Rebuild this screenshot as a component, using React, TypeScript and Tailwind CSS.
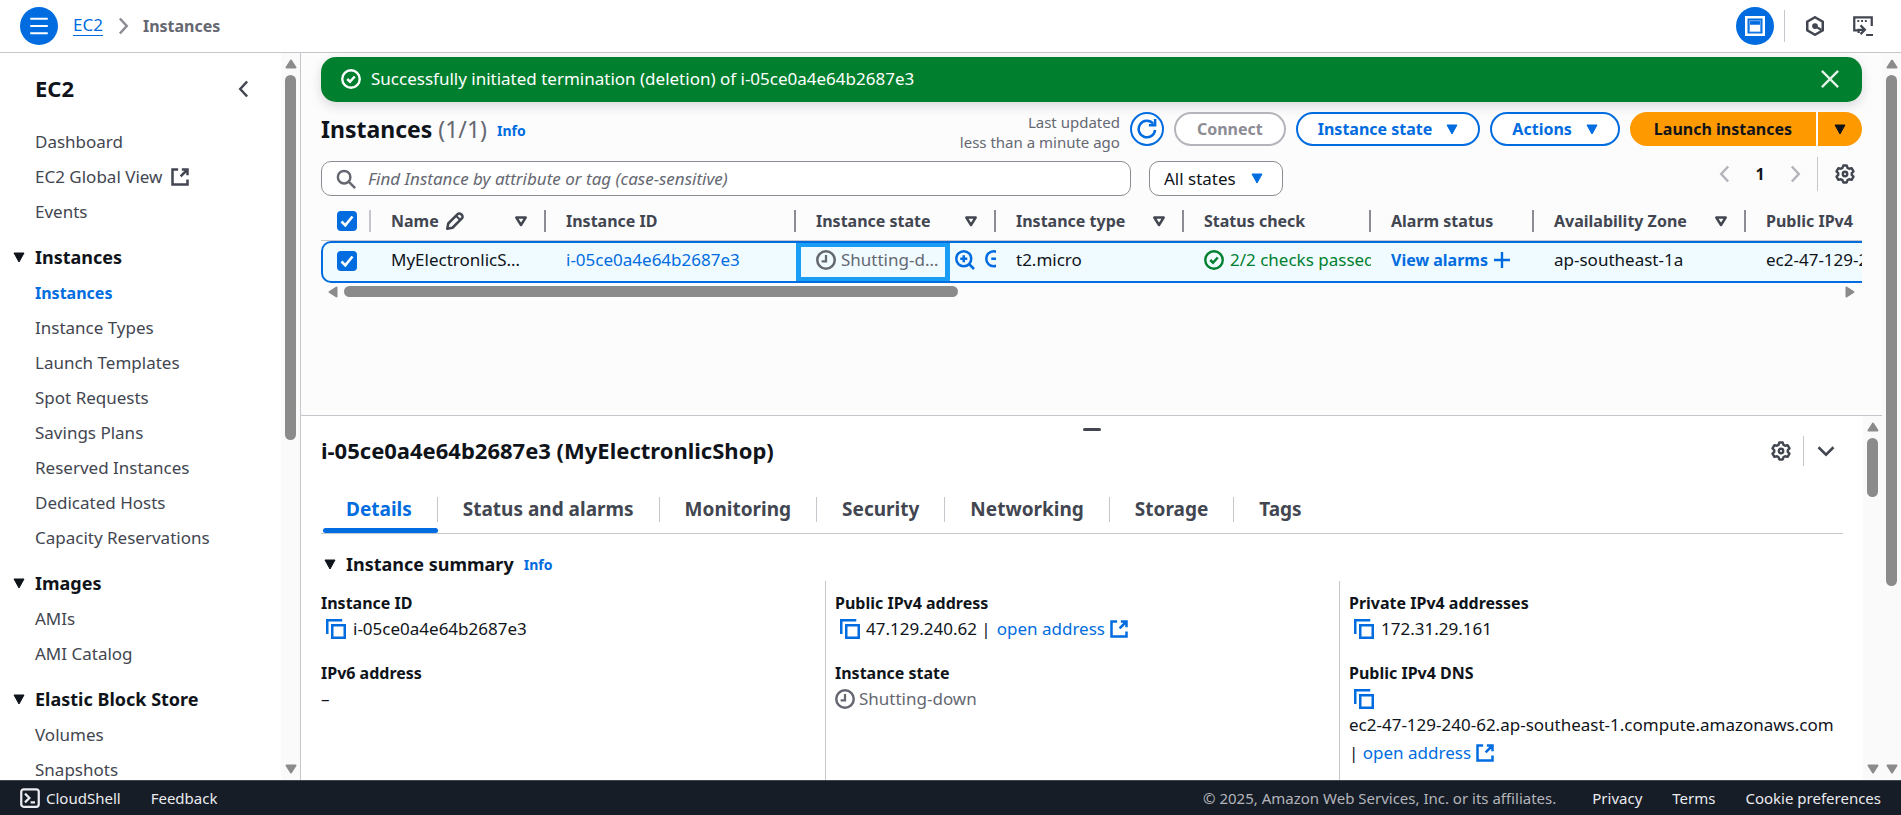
import React from 'react';

type IconProps = { className?: string; children: React.ReactNode };

function Icon({ className = 'size-5', children }: IconProps) {
  return (
    <svg viewBox="0 0 16 16" className={'shrink-0 ' + className} fill="none" stroke="currentColor" strokeWidth="2" aria-hidden="true">
      {children}
    </svg>
  );
}

const External = () => (
  <Icon>
    <path d="M14 10v4H2V2h4.5" />
    <path d="M9.5 2H14v4.5M14 2 8.5 7.5" />
  </Icon>
);
const Copy = () => (
  <Icon className="size-5 text-[#006ce0]">
    <path d="M1 12V1h12" />
    <path d="M5 5h10v10H5z" />
  </Icon>
);
const Clock = () => (
  <Icon>
    <circle cx="8" cy="8" r="7" />
    <path d="M8 4v5H4.5" strokeWidth="1.8" />
  </Icon>
);
const Success = () => (
  <Icon>
    <circle cx="8" cy="8" r="7" strokeWidth="1.9" />
    <path d="m5 8 2.2 2.2L11 6" />
  </Icon>
);
const Gear = () => (
  <Icon>
    <path
      d="M6.6 1.2h2.8l.6 1.9 1.3.7 2-.5 1.5 2.6-1.4 1.4v1.4l1.4 1.4-1.5 2.6-2-.5-1.3.7-.6 1.9H6.6l-.6-1.9-1.3-.7-2 .5-1.5-2.6 1.4-1.4V7.3L1.2 5.9l1.5-2.6 2 .5L6 3.1z"
      strokeWidth="1.9"
      strokeLinejoin="round"
    />
    <circle cx="8" cy="8" r="1.8" strokeWidth="1.9" />
  </Icon>
);
const Chevron = ({ d = 'M5.5 2l5.5 6-5.5 6', className }: { d?: string; className?: string }) => (
  <Icon className={className}>
    <path d={d} />
  </Icon>
);

function Caret({ className = '' }: { className?: string }) {
  return (
    <svg viewBox="0 0 12 11" className={'h-[11px] w-3 shrink-0 ' + className} aria-hidden="true">
      <path d="M1 1h10L6 10z" fill="currentColor" stroke="currentColor" strokeLinejoin="round" />
    </svg>
  );
}
function SortIcon() {
  return (
    <svg viewBox="0 0 12 11" className="h-[11px] w-3 shrink-0" aria-hidden="true">
      <path d="M1.3 1.5h9.4L6 9z" fill="none" stroke="currentColor" strokeWidth="2.4" strokeLinejoin="round" />
    </svg>
  );
}
function Arrow({ className = '' }: { className?: string }) {
  return (
    <svg viewBox="0 0 12 10" className={'h-[10px] w-3 shrink-0 text-[#8b8b8b] ' + className} aria-hidden="true">
      <path d="M1.5 8.5 6 1.5l4.5 7z" fill="currentColor" stroke="currentColor" strokeWidth="2" strokeLinejoin="round" />
    </svg>
  );
}

function VScroll({ thumb }: { thumb: string }) {
  return (
    <div className="flex w-[19px] shrink-0 flex-col items-center bg-[#fafafa] py-1.5" aria-hidden="true">
      <Arrow />
      <div className="mt-1.5 min-h-0 w-full grow">
        <div className={'mx-auto w-[11px] rounded-full bg-[#8b8b8b] ' + thumb} />
      </div>
      <Arrow className="rotate-180" />
    </div>
  );
}

function Check({ label }: { label: string }) {
  return (
    <label className="grid size-5 shrink-0 place-items-center">
      <input
        type="checkbox"
        defaultChecked
        aria-label={label}
        className="col-start-1 row-start-1 size-5 appearance-none rounded bg-[#006ce0]"
      />
      <svg viewBox="0 0 20 20" className="pointer-events-none col-start-1 row-start-1 size-5" fill="none" stroke="white" strokeWidth="2.6" aria-hidden="true">
        <path d="m4.5 10.5 3.8 3.8L15.5 5.5" />
      </svg>
    </label>
  );
}

const groups: { title?: string; items: string[] }[] = [
  { items: ['Dashboard', 'EC2 Global View', 'Events'] },
  {
    title: 'Instances',
    items: ['Instances', 'Instance Types', 'Launch Templates', 'Spot Requests', 'Savings Plans', 'Reserved Instances', 'Dedicated Hosts', 'Capacity Reservations'],
  },
  { title: 'Images', items: ['AMIs', 'AMI Catalog'] },
  { title: 'Elastic Block Store', items: ['Volumes', 'Snapshots'] },
];

function Sidebar() {
  return (
    <aside className="flex w-[301px] shrink-0 border-r border-[#c6c6cd] bg-white">
      <div className="min-w-0 grow overflow-hidden">
        <div className="flex h-[71px] items-center justify-between pr-[27px] pl-[35px]">
          <h2 className="text-[22px] font-bold text-[#0f141a]">EC2</h2>
          <button aria-label="Close navigation" className="text-[#424650]">
            <Chevron d="M10.5 2 5 8l5.5 6" />
          </button>
        </div>
        <nav className="flex flex-col gap-2.5">
          {groups.map((g, i) => (
            <div key={i}>
              {g.title && (
                <button className="flex h-9 w-full items-center gap-2.5 pl-[13px] text-lg font-bold text-[#0f141a]">
                  <Caret />
                  {g.title}
                </button>
              )}
              <ul>
                {g.items.map((it) => (
                  <li key={it} className="flex h-[35px] items-center pl-[35px]">
                    <a
                      href="#"
                      className={
                        'flex items-center gap-2 ' + (it === 'Instances' ? 'text-base font-bold text-[#006ce0]' : 'text-[17px] text-[#424650]')
                      }
                    >
                      {it}
                      {it === 'EC2 Global View' && <External />}
                    </a>
                  </li>
                ))}
              </ul>
            </div>
          ))}
        </nav>
      </div>
      <VScroll thumb="h-[365px]" />
    </aside>
  );
}

const columns = [
  { name: 'Name', w: 'w-[175px]', edit: true, sort: true },
  { name: 'Instance ID', w: 'w-[250px]' },
  { name: 'Instance state', w: 'w-[200px]', sort: true },
  { name: 'Instance type', w: 'w-[188px]', sort: true },
  { name: 'Status check', w: 'w-[187px]' },
  { name: 'Alarm status', w: 'w-[163px]' },
  { name: 'Availability Zone', w: 'w-[212px]', sort: true },
  { name: 'Public IPv4', w: 'w-auto', last: true },
];

const cell = 'h-[42px] overflow-hidden border-y-2 border-[#006ce0] bg-[#f0fbff] p-0 pb-1 pl-5';

function InstancesTable() {
  return (
    <div className="overflow-hidden">
      <table className="w-full table-fixed border-separate border-spacing-0 text-left text-[17px] whitespace-nowrap">
        <thead>
          <tr className="text-base text-[#424650]">
            <th className="h-[39px] w-[50px] border-b border-[#c6c6cd] p-0">
              <div className="flex h-[22px] items-center border-r-2 border-[#c6c6cd] pl-4">
                <Check label="Select all instances" />
              </div>
            </th>
            {columns.map((c) => (
              <th key={c.name} className={'border-b border-[#c6c6cd] p-0 ' + c.w}>
                <div className={'flex h-[22px] items-center justify-between pl-5 ' + (c.last ? '' : 'border-r-2 border-[#8c8c94] pr-[17px]')}>
                  <span className="flex items-center gap-1.5">
                    {c.name}
                    {c.edit && (
                      <Icon>
                        <path d="m1.800 14.200.8-4.200 7.500-7.500a1.900 1.900 0 0 1 2.700 0l.7.7a1.900 1.900 0 0 1 0 2.700L6 13.400z" strokeLinejoin="round" />
                        <path d="m9 4 3 3" strokeWidth="1.6" />
                      </Icon>
                    )}
                  </span>
                  {c.sort && <SortIcon />}
                </div>
              </th>
            ))}
          </tr>
        </thead>
        <tbody>
          <tr className="text-[#0f141a]">
            <td className="h-[42px] rounded-l-[10px] border-y-2 border-l-2 border-[#006ce0] bg-[#f0fbff] p-0 pb-0.5 pl-3.5">
              <Check label="Select MyElectronlicShop" />
            </td>
            <td className={cell}>
              <div className="mr-[17px] truncate">MyElectronlicShop</div>
            </td>
            <td className={cell}>
              <a href="#" className="text-[#006ce0]">i-05ce0a4e64b2687e3</a>
            </td>
            <td className={cell + ' relative'}>
              <div className="flex items-center gap-2">
                <div className="flex w-[131px] shrink-0 items-center gap-[5px] text-[#656871]">
                  <Clock />
                  <span className="truncate">Shutting-down</span>
                </div>
                <button aria-label="Filter to this value" className="text-[#006ce0]">
                  <Icon>
                    <circle cx="7" cy="7" r="6" />
                    <path d="m11.2 11.2 4 4M4.200 7h5.600M7 4.200v5.600" />
                  </Icon>
                </button>
                <button aria-label="Exclude this value" className="pl-0.5 text-[#006ce0]">
                  <Icon>
                    <circle cx="7" cy="7" r="6" />
                    <path d="m11.2 11.2 4 4M5 7h5" />
                  </Icon>
                </button>
              </div>
              <div className="pointer-events-none absolute -inset-y-px left-0 w-[154px] border-[5px] border-[#1a9df4]" />
            </td>
            <td className={cell}>t2.micro</td>
            <td className={cell}>
              <div className="flex items-center gap-1.5 overflow-hidden text-[#00802f]">
                <Success />
                2/2 checks passed
              </div>
            </td>
            <td className={cell}>
              <a href="#" className="flex items-center gap-1.5 text-base font-bold text-[#006ce0]">
                View alarms
                <Icon className="size-4">
                  <path d="M8 0v16M0 8h16" strokeWidth="2.4" />
                </Icon>
              </a>
            </td>
            <td className={cell}>ap-southeast-1a</td>
            <td className={cell}>ec2-47-129-240-62.ap-southeast-1</td>
          </tr>
        </tbody>
      </table>
    </div>
  );
}

const outline = 'flex h-[34px] shrink-0 items-center rounded-full border-2 bg-white text-base font-bold whitespace-nowrap';

function InstancesPanel() {
  return (
    <section className="flex h-[362px] shrink-0 flex-col px-5 pt-1">
      <div role="status" className="flex h-[45px] shrink-0 items-center gap-2.5 rounded-[15px] bg-[#00802f] pr-[22px] pb-0.5 pl-5 text-[17px] text-white shadow-[0_4px_12px_rgba(0,7,22,0.14)]">
        <Success />
        <span className="grow">Successfully initiated termination (deletion) of i-05ce0a4e64b2687e3</span>
        <button aria-label="Dismiss" className="text-[#e6f2e9]">
          <Icon>
            <path d="m1.5 1.5 13 13M14.5 1.5l-13 13" strokeWidth="1.8" />
          </Icon>
        </button>
      </div>
      <div className="flex items-start gap-2.5 pt-2.5">
        <h1 className="shrink-0 text-[23px] leading-[34px] font-bold text-[#0f141a]">
          Instances <span className="font-normal text-[#656871]">(1/1)</span>
        </h1>
        <a href="#" className="pt-0.5 text-sm leading-[34px] font-bold text-[#006ce0]">Info</a>
        <p className="grow text-right text-[15px] leading-5 text-[#656871]">
          Last updated
          <br />
          less than a minute ago
        </p>
        <button aria-label="Refresh" className="grid size-[34px] shrink-0 place-items-center rounded-full border-2 border-[#006ce0] bg-white text-[#006ce0]">
          <Icon>
            <path d="M14.5 8.800A6.600 6.600 0 1 1 13 3.800" />
            <path d="M14.5 0v5h-5" />
          </Icon>
        </button>
        <button className={outline + ' border-[#b4b4bb] px-[21px] text-[#8c8c94]'}>Connect</button>
        <button className={outline + ' gap-3.5 border-[#006ce0] px-5 text-[#006ce0]'}>
          Instance state <Caret />
        </button>
        <button className={outline + ' gap-3.5 border-[#006ce0] px-5 text-[#006ce0]'}>
          Actions <Caret />
        </button>
        <div className="flex shrink-0 gap-0.5 text-base font-bold text-[#0f141a]">
          <button className="h-[34px] rounded-l-full bg-[#ff9900] px-6">Launch instances</button>
          <button aria-label="More launch options" className="grid h-[34px] w-11 place-items-center rounded-r-full bg-[#ff9900]">
            <Caret />
          </button>
        </div>
      </div>
      <div className="flex items-start pt-[5px]">
        <div className="mt-1 flex h-[35px] max-w-[810px] grow items-center gap-3 rounded-[10px] border border-[#8c8c94] bg-white pl-3.5 text-[#656871]">
          <Icon>
            <circle cx="6.5" cy="6.5" r="5" />
            <path d="m10.3 10.3 5 5" />
          </Icon>
          <input
            type="search"
            aria-label="Find Instance"
            placeholder="Find Instance by attribute or tag (case-sensitive)"
            className="min-w-0 grow text-[17px] outline-none placeholder:text-[#656871] placeholder:italic"
          />
        </div>
        <div className="mt-1 ml-[18px] grid w-[134px] shrink-0 items-center">
          <select aria-label="State filter" className="col-start-1 row-start-1 h-[35px] appearance-none rounded-[10px] border border-[#8c8c94] bg-white pl-3.5 text-[17px] text-[#0f141a]">
            <option>All states</option>
          </select>
          <Caret className="pointer-events-none col-start-1 row-start-1 mr-5 justify-self-end text-[#006ce0]" />
        </div>
        <div className="ml-auto flex h-[34px] shrink-0 items-center pr-[7px] text-[#424650]">
          <button aria-label="Previous page" className="text-[#b4b4bb]">
            <Chevron d="M10.5 2 5 8l5.5 6" />
          </button>
          <button className="w-[50px] text-base font-bold text-[#0f141a]">1</button>
          <button aria-label="Next page" className="text-[#b4b4bb]">
            <Chevron />
          </button>
          <div className="mr-[17px] ml-3 h-[34px] w-px bg-[#c6c6cd]" />
          <button aria-label="Preferences">
            <Gear />
          </button>
        </div>
      </div>
      <div className="pt-1.5">
        <InstancesTable />
        <div className="flex h-[17px] items-center px-1.5" aria-hidden="true">
          <Arrow className="-rotate-90" />
          <div className="ml-[5px] h-[11px] w-[614px] rounded-full bg-[#8b8b8b]" />
          <Arrow className="ml-auto rotate-90" />
        </div>
      </div>
    </section>
  );
}

function Field({ label, children }: { label: string; children: React.ReactNode }) {
  return (
    <div className="pb-5">
      <dt className="text-base leading-[25px] font-bold">{label}</dt>
      <dd className="text-[17px] leading-[25px]">{children}</dd>
    </div>
  );
}

const OpenAddress = () => (
  <a href="#" className="inline-flex items-center gap-1 text-[#006ce0]">
    open address <External />
  </a>
);

const tabs = ['Details', 'Status and alarms', 'Monitoring', 'Security', 'Networking', 'Storage', 'Tags'];

function DetailsPanel() {
  return (
    <section className="relative flex min-h-0 grow border-t border-[#c6c6cd] bg-white text-[#0f141a]">
      <button aria-label="Resize panel" className="absolute top-3 left-1/2 h-[3px] w-[18px] -translate-x-1/2 rounded-full bg-[#424650]" />
      <div className="flex min-w-0 grow flex-col overflow-hidden px-5 pt-3.5">
        <div className="flex h-[41px] shrink-0 items-center pr-[7px]">
          <h2 className="grow text-[22px] font-bold">i-05ce0a4e64b2687e3 (MyElectronlicShop)</h2>
          <button aria-label="Panel preferences" className="text-[#424650]">
            <Gear />
          </button>
          <div className="mr-3 ml-3 h-[30px] w-px bg-[#c6c6cd]" />
          <button aria-label="Close panel" className="text-[#424650]">
            <Chevron d="m2 5 6 6 6-6" />
          </button>
        </div>
        <div role="tablist" className="mt-3.5 flex h-[49px] shrink-0 border-b border-[#c6c6cd] text-[19px] font-bold text-[#424650]">
          {tabs.map((t, i) => (
            <button key={t} role="tab" aria-selected={i === 0} className={i === 0 ? 'relative text-[#006ce0]' : ''}>
              <span className={'flex h-[25px] items-center px-[25px] ' + (i < tabs.length - 1 ? 'border-r border-[#c6c6cd]' : '')}>{t}</span>
              {i === 0 && <span className="absolute right-0 bottom-0 left-0.5 h-[5px] rounded-full bg-[#006ce0]" />}
            </button>
          ))}
        </div>
        <div className="flex items-center gap-2.5 pt-4">
          <button className="flex items-center gap-2.5 pl-[3px] text-lg leading-7 font-bold">
            <Caret />
            Instance summary
          </button>
          <a href="#" className="pt-0.5 text-sm font-bold text-[#006ce0]">Info</a>
        </div>
        <dl className="-mx-2.5 mt-[3px] grid min-h-0 grow grid-cols-3">
          <div className="pt-2.5 pl-2.5">
            <Field label="Instance ID">
              <span className="flex items-center gap-[7px] pl-[5px]">
                <Copy /> i-05ce0a4e64b2687e3
              </span>
            </Field>
            <Field label="IPv6 address">–</Field>
          </div>
          <div className="border-l border-[#c6c6cd] pt-2.5 pl-[9px]">
            <Field label="Public IPv4 address">
              <span className="flex items-center gap-1.5 pl-[5px]">
                <Copy /> <span>47.129.240.62 |</span> <OpenAddress />
              </span>
            </Field>
            <Field label="Instance state">
              <span className="flex items-center gap-1 text-[#656871]">
                <Clock /> Shutting-down
              </span>
            </Field>
          </div>
          <div className="border-l border-[#c6c6cd] pt-2.5 pl-[9px]">
            <Field label="Private IPv4 addresses">
              <span className="flex items-center gap-[7px] pl-[5px]">
                <Copy /> 172.31.29.161
              </span>
            </Field>
            <Field label="Public IPv4 DNS">
              <span className="flex h-[25px] items-center pl-[5px]">
                <Copy />
              </span>
              <span className="block leading-7">ec2-47-129-240-62.ap-southeast-1.compute.amazonaws.com</span>
              <span className="block leading-7">
                | <OpenAddress />
              </span>
            </Field>
          </div>
        </dl>
      </div>
      <VScroll thumb="h-[59px]" />
    </section>
  );
}

export default function App() {
  return (
    <div className="flex h-screen flex-col overflow-hidden bg-[#fcfcfd] font-['Noto_Sans',sans-serif]">
      <header className="flex h-[53px] shrink-0 items-center border-b border-[#c6c6cd] bg-white pr-7 pb-px pl-5 text-[17px] text-[#424650]">
        <button aria-label="Open menu" className="grid size-[38px] place-items-center rounded-full bg-[#006ce0] text-white">
          <Icon>
            <path d="M1 2.200h14M1 8h14M1 13.800h14" strokeWidth="1.700" />
          </Icon>
        </button>
        <nav aria-label="Breadcrumb" className="ml-[15px] flex items-center">
          <a href="#" className="border-b border-[#006ce0] leading-5 text-[#006ce0]">EC2</a>
          <Chevron className="mx-2.5 size-5 text-[#8c8c94]" />
          <span className="text-base font-bold text-[#656871]">Instances</span>
        </nav>
        <div className="ml-auto flex items-center">
          <button aria-label="Split view" className="grid size-[38px] place-items-center rounded-full bg-[#006ce0] text-white">
            <Icon>
              <path d="M1 1h14v14H1z" />
              <path d="M3.600 3.600h8.800v8.800H3.600z" strokeWidth="1" strokeOpacity=".35" />
              <path d="M4 7h8v5.400H4z" fill="currentColor" stroke="none" />
            </Icon>
          </button>
          <div className="mx-2.5 h-8 w-px bg-[#c6c6cd]" />
          <button aria-label="Resources" className="mx-2.5">
            <Icon>
              <path d="m8 1 6.200 3.500v7L8 15l-6.200-3.500v-7z" />
              <circle cx="8" cy="8" r="1.800" fill="currentColor" strokeWidth="1" />
              <path d="m8.500 8.500 4.500 2.500" strokeWidth="1.800" />
            </Icon>
          </button>
          <button aria-label="Console tools" className="ml-[18px]">
            <Icon>
              <path d="M5 11.500H1V1h14v7" strokeWidth="1.800" />
              <path d="M3.500 4H5M6.500 4H8M9.500 4H11" strokeWidth="1.600" />
              <path d="M4.500 13.500V11H9M6 7.500 9.500 11 6 14.500M10.500 15.200H16" strokeWidth="1.800" />
            </Icon>
          </button>
        </div>
      </header>
      <div className="flex min-h-0 grow">
        <Sidebar />
        <main className="flex min-w-0 grow">
          <div className="flex min-w-0 grow flex-col">
            <InstancesPanel />
            <DetailsPanel />
          </div>
          <VScroll thumb="h-[511px]" />
        </main>
      </div>
      <footer className="flex h-[35px] shrink-0 items-center border-t border-[#424650] bg-[#161d26] px-5 text-[15px] text-[#ebebf0]">
        <button className="flex items-center gap-1.5">
          <Icon>
            <rect x="1" y="1" width="14" height="14" rx="2" strokeWidth="1.800" />
            <path d="m4 4.500 3.500 3.500L4 11.500M8.500 11.500H12" strokeWidth="1.800" />
          </Icon>
          CloudShell
        </button>
        <button className="ml-[30px]">Feedback</button>
        <span className="ml-auto text-[#b4b4bb]">© 2025, Amazon Web Services, Inc. or its affiliates.</span>
        <a href="#" className="ml-9">Privacy</a>
        <a href="#" className="ml-[30px]">Terms</a>
        <a href="#" className="ml-[30px]">Cookie preferences</a>
      </footer>
    </div>
  );
}
